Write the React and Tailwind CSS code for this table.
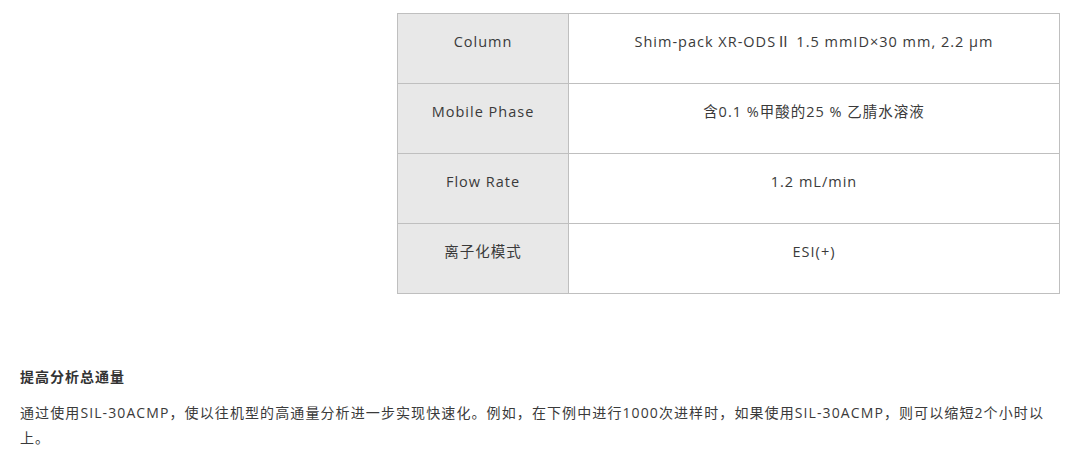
export default function App() {
  const rows = [
    ["Column", "Shim-pack XR-ODSⅡ 1.5 mmID×30 mm, 2.2 µm"],
    ["Mobile Phase", "含0.1 %甲酸的25 % 乙腈水溶液"],
    ["Flow Rate", "1.2 mL/min"],
    ["离子化模式", "ESI(+)"],
  ];
  return (
    <div
      className="w-[1074px] h-[450px] bg-white text-[14px] text-[#333] tracking-[1px]"
      style={{ fontFamily: '"Open Sans", "Noto Sans CJK SC", sans-serif' }}
    >
      <div className="pt-[13px] pl-[397px]">
        <table className="w-[663px] border-collapse text-[14.5px]">
          <tbody>
            {rows.map(([k, v], i) => (
              <tr key={i} className="h-[70px]">
                <td className="w-[171px] border border-[#bfbfbf] bg-[#e8e8e8] text-center align-top pt-[16px] leading-[24px] text-[#3a3a3a]">
                  {k}
                </td>
                <td className="border border-[#bfbfbf] text-center align-top pt-[16px] leading-[24px] text-[#3a3a3a]">
                  {v}
                </td>
              </tr>
            ))}
          </tbody>
        </table>
      </div>
      <div className="px-[20px] pt-[70px]">
        <div className="font-bold leading-[25px] text-[#333]">提高分析总通量</div>
        <p className="mt-[11px] leading-[25px] text-[#3a3a3a] tracking-[1.1px]">
          通过使用SIL-30ACMP，使以往机型的高通量分析进一步实现快速化。例如，在下例中进行1000次进样时，如果使用SIL-30ACMP，则可以缩短2个小时以上。
        </p>
      </div>
    </div>
  );
}
